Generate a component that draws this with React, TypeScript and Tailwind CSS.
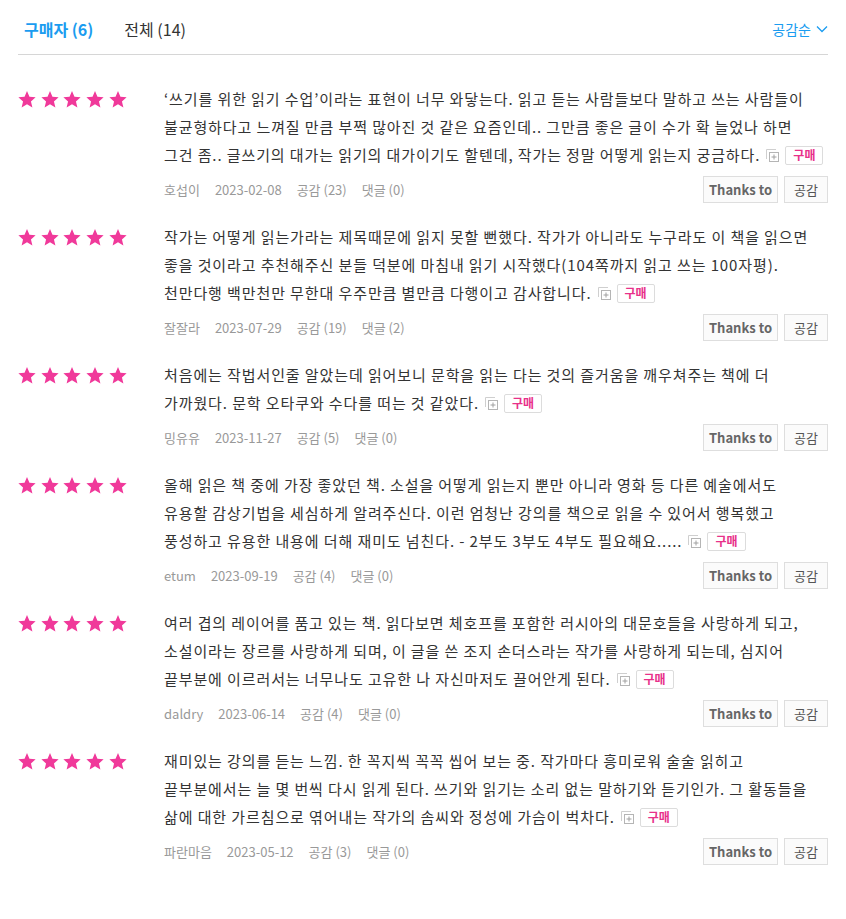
import React from 'react';

type Review = {
  lines: string[];
  user: string;
  date: string;
  likes: number;
  comments: number;
};

const REVIEWS: Review[] = [
  {
    lines: [
      '‘쓰기를 위한 읽기 수업’이라는 표현이 너무 와닿는다. 읽고 듣는 사람들보다 말하고 쓰는 사람들이',
      '불균형하다고 느껴질 만큼 부쩍 많아진 것 같은 요즘인데.. 그만큼 좋은 글이 수가 확 늘었나 하면',
      '그건 좀.. 글쓰기의 대가는 읽기의 대가이기도 할텐데, 작가는 정말 어떻게 읽는지 궁금하다.',
    ],
    user: '호섭이',
    date: '2023-02-08',
    likes: 23,
    comments: 0,
  },
  {
    lines: [
      '작가는 어떻게 읽는가라는 제목때문에 읽지 못할 뻔했다. 작가가 아니라도 누구라도 이 책을 읽으면',
      '좋을 것이라고 추천해주신 분들 덕분에 마침내 읽기 시작했다(104쪽까지 읽고 쓰는 100자평).',
      '천만다행 백만천만 무한대 우주만큼 별만큼 다행이고 감사합니다.',
    ],
    user: '잘잘라',
    date: '2023-07-29',
    likes: 19,
    comments: 2,
  },
  {
    lines: [
      '처음에는 작법서인줄 알았는데 읽어보니 문학을 읽는 다는 것의 즐거움을 깨우쳐주는 책에 더',
      '가까웠다. 문학 오타쿠와 수다를 떠는 것 같았다.',
    ],
    user: '밍유유',
    date: '2023-11-27',
    likes: 5,
    comments: 0,
  },
  {
    lines: [
      '올해 읽은 책 중에 가장 좋았던 책. 소설을 어떻게 읽는지 뿐만 아니라 영화 등 다른 예술에서도',
      '유용할 감상기법을 세심하게 알려주신다. 이런 엄청난 강의를 책으로 읽을 수 있어서 행복했고',
      '풍성하고 유용한 내용에 더해 재미도 넘친다. - 2부도 3부도 4부도 필요해요.....',
    ],
    user: 'etum',
    date: '2023-09-19',
    likes: 4,
    comments: 0,
  },
  {
    lines: [
      '여러 겹의 레이어를 품고 있는 책. 읽다보면 체호프를 포함한 러시아의 대문호들을 사랑하게 되고,',
      '소설이라는 장르를 사랑하게 되며, 이 글을 쓴 조지 손더스라는 작가를 사랑하게 되는데, 심지어',
      '끝부분에 이르러서는 너무나도 고유한 나 자신마저도 끌어안게 된다.',
    ],
    user: 'daldry',
    date: '2023-06-14',
    likes: 4,
    comments: 0,
  },
  {
    lines: [
      '재미있는 강의를 듣는 느낌. 한 꼭지씩 꼭꼭 씹어 보는 중. 작가마다 흥미로워 술술 읽히고',
      '끝부분에서는 늘 몇 번씩 다시 읽게 된다. 쓰기와 읽기는 소리 없는 말하기와 듣기인가. 그 활동들을',
      '삶에 대한 가르침으로 엮어내는 작가의 솜씨와 정성에 가슴이 벅차다.',
    ],
    user: '파란마음',
    date: '2023-05-12',
    likes: 3,
    comments: 0,
  },
];

const Star = () => (
  <svg width="18" height="17" viewBox="1 0.5 22 21.5" className="shrink-0">
    <path
      d="M12 0.6l3.1 7.2 7.8 0.7-5.9 5.2 1.8 7.7L12 17.4l-6.8 4 1.8-7.7-5.9-5.2 7.8-0.7z"
      fill="#f0399a"
    />
  </svg>
);

const ExpandIcon = () => (
  <svg width="13" height="13" viewBox="0 0 13 13" className="inline-block align-middle mx-[6px] -mt-[2px]">
    <rect x="3.5" y="3.5" width="9" height="9" fill="none" stroke="#b5b5b5" />
    <path d="M0.5 10V0.5H10" fill="none" stroke="#cfcfcf" />
    <path d="M8 5.5v5M5.5 8h5" stroke="#a0a0a0" />
  </svg>
);

function ReviewItem({ r }: { r: Review }) {
  return (
    <div className="flex pb-[20px]">
      <div className="w-[146px] shrink-0 flex gap-[4.7px] pt-[6px]">
        <Star />
        <Star />
        <Star />
        <Star />
        <Star />
      </div>
      <div className="flex-1 min-w-0">
        <div className="text-[15px] leading-[28px] text-[#333] tracking-[0.9px]">
          {r.lines.map((l, i) => (
            <div key={i} className="whitespace-nowrap">
              {l}
              {i === r.lines.length - 1 && (
                <>
                  <ExpandIcon />
                  <span className="inline-flex items-center h-[19px] px-[7px] border border-[#dcdcdc] rounded-[2px] text-[12px] font-bold text-[#e8318a] align-middle -mt-[3px] leading-none tracking-normal">
                    구매
                  </span>
                </>
              )}
            </div>
          ))}
        </div>
        <div className="mt-[7px] flex items-center justify-between">
          <div className="flex items-center text-[13px] text-[#999] gap-[15px]">
            <span>{r.user}</span>
            <span>{r.date}</span>
            <span>공감 ({r.likes})</span>
            <span>댓글 ({r.comments})</span>
          </div>
          <div className="flex gap-[6px]">
            <button className="h-[27px] w-[75px] border border-[#dedede] bg-[#fbfbfb] text-[13px] font-semibold text-[#666]">
              Thanks to
            </button>
            <button className="h-[27px] w-[44px] border border-[#dedede] bg-[#fbfbfb] text-[13px] text-[#555]">
              공감
            </button>
          </div>
        </div>
      </div>
    </div>
  );
}

export default function App() {
  return (
    <div
      className="w-[846px] min-h-[919px] bg-white px-[18px]"
      style={{ fontFamily: '"Noto Sans CJK KR", "Noto Sans", sans-serif' }}
    >
      <div className="flex items-center justify-between h-[55px] border-b border-[#d6d6d6] pt-[4px]">
        <div className="flex items-center text-[16px] pl-[6px] gap-[31px]">
          <span className="font-bold text-[#1a9cf0]">구매자 (6)</span>
          <span className="text-[#333]">전체 (14)</span>
        </div>
        <div className="flex items-center gap-[5px] text-[14px] text-[#1a9cf0]">
          <span>공감순</span>
          <svg width="12" height="8" viewBox="0 0 12 8">
            <path d="M1 1.5l5 5 5-5" fill="none" stroke="#1a9cf0" strokeWidth="1.3" />
          </svg>
        </div>
      </div>
      <div className="pt-[30px]">
        {REVIEWS.map((r, i) => (
          <ReviewItem key={i} r={r} />
        ))}
      </div>
    </div>
  );
}
